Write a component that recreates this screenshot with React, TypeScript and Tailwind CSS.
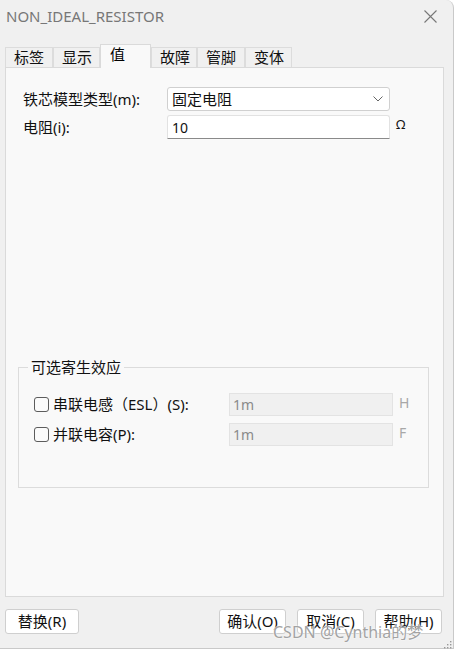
import React from 'react';

const font = "font-['Noto_Sans','Noto_Sans_CJK_SC',sans-serif]";

function Tab({ label, active }: { label: string; active?: boolean }) {
  if (active) {
    return (
      <div className="relative z-10 -mb-px h-[24px] w-[51px] border border-b-0 border-[#dadada] bg-[#f9f9f9] pl-[9px] text-[15px] leading-[18px] text-black">
        {label}
      </div>
    );
  }
  return (
    <div className="h-[20px] self-end border border-b-0 border-l-0 border-[#dcdcdc] bg-[#f0f0f0] pl-[8px] text-[15px] leading-[19px] text-[#111] first:border-l">
      {label}
    </div>
  );
}

function Checkbox() {
  return <div className="h-[15px] w-[15px] shrink-0 rounded-[3px] border border-[#5c5c5c] bg-[#fbfbfb]" />;
}

function Btn({ children, w }: { children: React.ReactNode; w: string }) {
  return (
    <button className={`h-[25px] ${w} rounded-[3px] border border-[#cfcfcf] bg-white text-[15px] leading-[23px] text-[#111]`}>
      {children}
    </button>
  );
}

export default function App() {
  return (
    <div className={`relative h-[651px] w-[458px] overflow-hidden bg-white ${font}`}>
      <div className="flex h-[649px] w-[454px] flex-col rounded-tr-[8px] border-r border-b border-[#c9c9c9] bg-[#f0f0f0]">
        {/* title bar */}
        <div className="flex h-[33px] shrink-0 items-center justify-between pl-[6px] pr-[16px]">
          <span className="text-[15px] text-[#777]">NON_IDEAL_RESISTOR</span>
          <svg width="13" height="13" viewBox="0 0 13 13" className="text-[#777]">
            <path d="M0.5 0.5 L12.5 12.5 M12.5 0.5 L0.5 12.5" stroke="currentColor" strokeWidth="1.1" />
          </svg>
        </div>

        {/* tabs */}
        <div className="mt-[11px] flex h-[23px] items-end pl-[5px]">
          <div className="w-[48px]"><Tab label="标签" /></div>
          <div className="w-[47px]"><Tab label="显示" /></div>
          <Tab label="值" active />
          <div className="w-[46px]"><Tab label="故障" /></div>
          <div className="w-[48px]"><Tab label="管脚" /></div>
          <div className="w-[47px]"><Tab label="变体" /></div>
        </div>

        {/* tab panel */}
        <div className="ml-[5px] flex h-[530px] w-[439px] flex-col border border-[#dadada] bg-[#f9f9f9]">
          <div className="mt-[19px] flex flex-col gap-[4px] pl-[17px]">
            <div className="flex h-[24px] items-center">
              <span className="w-[144px] text-[15px] text-[#111]">铁芯模型类型(m):</span>
              <div className="flex h-[24px] w-[223px] items-center justify-between rounded-[3px] border border-[#d0d0d0] bg-white pl-[4px] pr-[6px]">
                <span className="text-[15px] text-[#111]">固定电阻</span>
                <svg width="10" height="6" viewBox="0 0 10 6">
                  <path d="M0.5 0.5 L5 5 L9.5 0.5" fill="none" stroke="#666" strokeWidth="1" />
                </svg>
              </div>
            </div>
            <div className="flex h-[24px] items-center">
              <span className="w-[144px] text-[15px] text-[#111]">电阻(i):</span>
              <div className="flex h-[24px] w-[223px] items-center rounded-t-[3px] border border-[#e2e2e2] border-b-[#8a8a8a] bg-white pl-[4px]">
                <span className="text-[14px] text-[#111]">10</span>
              </div>
              <span className="ml-[6px] -mt-[4px] text-[13px] text-[#111]">Ω</span>
            </div>
          </div>

          <fieldset className="ml-[12px] mt-[218px] h-[131px] w-[411px] border border-[#dcdcdc] pl-[15px]">
            <legend className="ml-[-6px] px-[3px] text-[15px] leading-[20px] text-[#111]">可选寄生效应</legend>
            <div className="mt-[16px] flex flex-col gap-[7px]">
              <div className="flex h-[23px] items-center">
                <Checkbox />
                <span className="ml-[4px] w-[176px] text-[15px] text-[#111]">串联电感（ESL）(S):</span>
                <div className="flex h-[23px] w-[164px] items-center border border-[#e3e3e3] bg-[#f0f0f0] pl-[3px] text-[14px] text-[#8a8a8a]">1m</div>
                <span className="ml-[6px] -mt-[4px] text-[14px] text-[#a8a8a8]">H</span>
              </div>
              <div className="flex h-[23px] items-center">
                <Checkbox />
                <span className="ml-[4px] w-[176px] text-[15px] text-[#111]">并联电容(P):</span>
                <div className="flex h-[23px] w-[164px] items-center border border-[#e3e3e3] bg-[#f0f0f0] pl-[3px] text-[14px] text-[#8a8a8a]">1m</div>
                <span className="ml-[6px] -mt-[4px] text-[14px] text-[#a8a8a8]">F</span>
              </div>
            </div>
          </fieldset>
        </div>

        {/* buttons */}
        <div className="mt-[12px] flex pl-[5px]">
          <Btn w="w-[74px]">替换(R)</Btn>
          <div className="ml-[140px] flex gap-[11px]">
            <Btn w="w-[67px]">确认(O)</Btn>
            <Btn w="w-[67px]">取消(C)</Btn>
            <Btn w="w-[67px]">帮助(H)</Btn>
          </div>
        </div>
      </div>

      {/* resize grip */}
      <svg className="absolute left-[443px] top-[640px]" width="9" height="9" viewBox="0 0 9 9">
        <rect x="7" y="1" width="1.4" height="1.4" fill="#999" />
        <rect x="4" y="4" width="1.4" height="1.4" fill="#999" />
        <rect x="7" y="4" width="1.4" height="1.4" fill="#999" />
        <rect x="1" y="7" width="1.4" height="1.4" fill="#999" />
        <rect x="4" y="7" width="1.4" height="1.4" fill="#999" />
        <rect x="7" y="7" width="1.4" height="1.4" fill="#999" />
      </svg>

      {/* watermark */}
      <span className="absolute left-[273px] top-[621px] text-[16px] leading-[22px] text-[#a3a3a3] [text-shadow:0_0_2px_#fff,0_0_1px_#fff]">
        CSDN @Cynthia的梦
      </span>
    </div>
  );
}
